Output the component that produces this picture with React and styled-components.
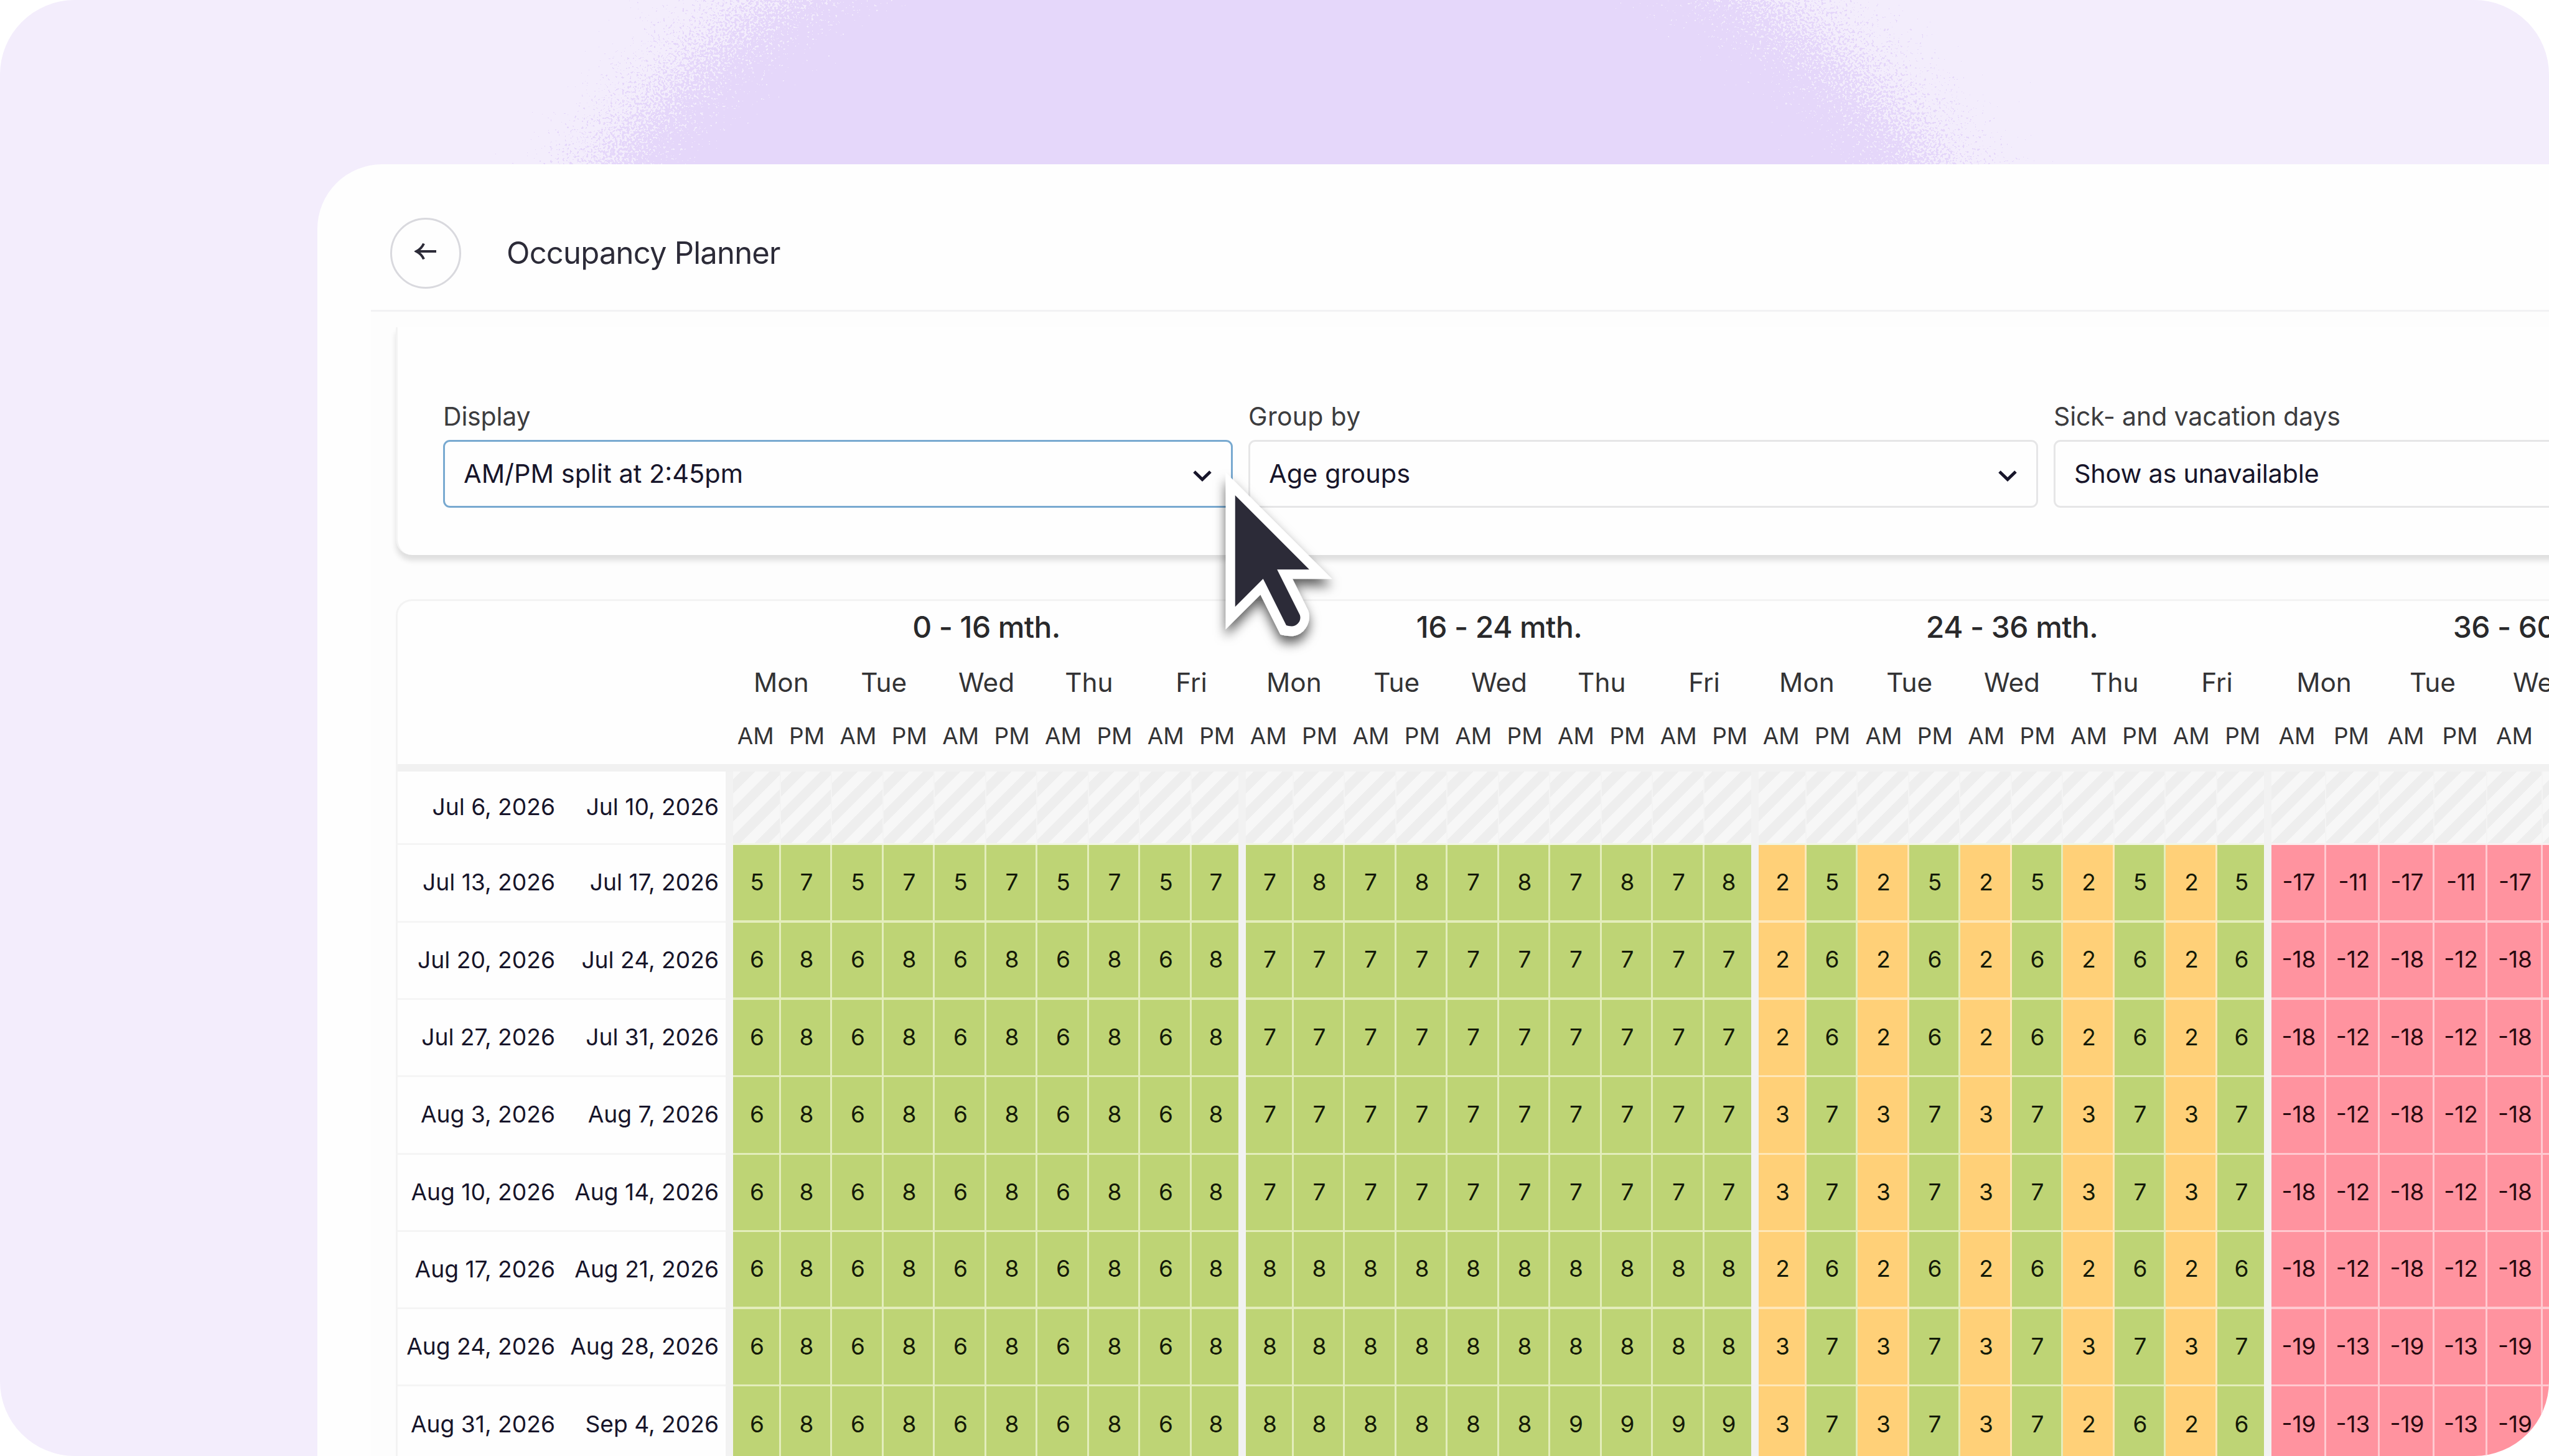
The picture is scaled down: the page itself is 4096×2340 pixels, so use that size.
import React from 'react';
import styled, { createGlobalStyle } from 'styled-components';

const Global = createGlobalStyle`
  *, *::before, *::after { box-sizing: border-box; }
  body { margin: 0; background: #fff; font-family: Inter, "Liberation Sans", sans-serif; }
`;

const INK = '#2c2b38';
const COLUMNS = [77, 82, 83, 82, 83, 82, 83, 82, 83, 75];
const LAST_COLUMNS = [88, 86, 88, 85, 89, 88];
const HEAD_COLUMNS = Array(10).fill(82.4);
const LAST_HEAD_COLUMNS = [88, 87, 88, 86, 89, 85, 86, 86, 86, 86];

const Stage = styled.main`
  position: relative;
  width: 4096px;
  height: 2340px;
  overflow: hidden;
  border-radius: 120px;
  background: #f3edfc;
  padding: 264px 0 0 510px;
`;

const Glow = styled.svg`
  position: absolute;
  left: 0;
  top: 0;
`;

const Panel = styled.section`
  position: relative;
  width: 3586px;
  height: 2076px;
  background: #fefefe;
  border-radius: 104px 0 0 0;
  padding-left: 86px;
`;

const TopBar = styled.header`
  display: flex;
  align-items: center;
  height: 237px;
  padding: 51px 0 0 31px;
  border-bottom: 3px solid #f2f2f3;
  color: ${INK};
`;

const BackButton = styled.button`
  display: grid;
  place-items: center;
  width: 114px;
  height: 114px;
  margin: 0;
  padding: 0 0 6px;
  border: 3px solid #d9d9de;
  border-radius: 50%;
  background: transparent;
  color: ${INK};
`;

const Title = styled.h1`
  margin: 0 0 0 73px;
  font-size: 49px;
  font-weight: 400;
  line-height: 60px;
  letter-spacing: -0.8px;
`;

const Body = styled.div`
  background: #fdfdfd;
  height: 1839px;
  padding-left: 40px;
  overflow: hidden;
`;

const Filters = styled.section`
  display: grid;
  grid-template-columns: repeat(3, 1269px);
  column-gap: 25px;
  width: 3980px;
  height: 366px;
  margin-top: 25px;
  padding: 117px 0 0 73px;
  border-left: 3px solid #f3f3f3;
  border-radius: 0 0 0 26px;
  background: #fefefe;
  box-shadow: 0 9px 9px rgba(0, 0, 0, 0.12);
`;

const Field = styled.label`
  display: block;
  color: #3c3c3e;
  font-size: 41px;
  line-height: 52px;
`;

const FieldName = styled.span`
  display: block;
  letter-spacing: ${(p) => p.$ls || 0}px;
`;

const Select = styled.span`
  display: flex;
  align-items: center;
  justify-content: space-between;
  height: 109px;
  margin-top: 12px;
  padding: 0 30px 2px;
  border: 3px solid ${(p) => (p.$active ? '#78a9d0' : '#e6e6e7')};
  border-radius: 11px;
  color: #17152a;
  background: #fefefe;
  font-size: 41.5px;
  letter-spacing: ${(p) => p.$ls || 0}px;
`;

const Table = styled.section`
  width: 3980px;
  margin-top: 71px;
  border: 3px solid #f3f3f3;
  border-right: 0;
  border-radius: 26px 0 0 0;
  background: #fefefe;
`;

const TableHead = styled.div`
  display: flex;
  height: 274px;
  border-bottom: 12px solid #f1f1f1;
  padding-left: 534px;
`;

const HeadGroup = styled.div`
  flex: none;
  padding-left: ${(p) => p.$shift}px;
  text-align: center;
  color: #333335;
`;

const GroupName = styled.div`
  height: 87px;
  padding-top: 12px;
  font-size: 48px;
  font-weight: 500;
  line-height: 60px;
  letter-spacing: -0.6px;
  color: #29292b;
`;

const HeadRow = styled.div`
  display: flex;
  height: ${(p) => p.$height}px;
  font-size: ${(p) => p.$size}px;
  line-height: 88px;
`;

const HeadCell = styled.span`
  flex: none;
  width: ${(p) => p.$width}px;
  white-space: nowrap;
`;

const Row = styled.div`
  display: flex;
  height: ${(p) => p.$height}px;
`;

const Dates = styled.div`
  display: flex;
  flex: none;
  width: 527px;
  padding-bottom: 3px;
  border-bottom: 3px solid #f5f5f5;
  color: #17152a;
  font-size: 37.2px;
`;

const DateText = styled.span`
  display: flex;
  align-items: center;
  justify-content: flex-end;
  width: ${(p) => p.$width}px;
  flex: none;
  white-space: nowrap;
`;

const Group = styled.div`
  display: flex;
  flex: none;
  border-left: 12px solid #f2f2f2;
`;

const tones = {
  green: ['#bed475', '#e3edbb'],
  amber: ['#ffd078', '#ffe7b8'],
  red: ['#ff939f', '#ffc9d0'],
};

const Cell = styled.span`
  display: flex;
  align-items: center;
  justify-content: center;
  flex: none;
  width: ${(p) => p.$width}px;
  padding: 0 0 3px 3px;
  background: ${(p) => tones[p.$tone][0]};
  border-bottom: ${(p) => (p.$thick ? 4 : 3)}px solid ${(p) => tones[p.$tone][1]};
  border-right: ${(p) => (p.$last ? 0 : 3)}px solid ${(p) => tones[p.$tone][1]};
  color: ${(p) => (p.$tone === 'red' ? '#2a0a10' : '#141a08')};
  font-size: 37px;
`;

const ClosedCell = styled.span`
  flex: none;
  width: ${(p) => p.$width}px;
  border-right: ${(p) => (p.$last ? 0 : 2)}px solid #f4f4f4;
  border-bottom: 3px solid ${(p) => (p.$pink ? '#fbeef0' : '#f1f6e2')};
  background: repeating-linear-gradient(-45deg, #f7f7f7 0 12.7px, #eeeeee 12.7px 28.8px, #f7f7f7 28.8px 32.2px);
`;

const Pointer = styled.svg`
  position: absolute;
  left: 1954px;
  top: 734px;
  overflow: visible;
`;

const Arrow = () => (
  <svg width="36" height="28" viewBox="0 0 36 28" fill="none" stroke="currentColor" strokeWidth="4">
    <path d="M35 14H4M15 1.5C13 6 8 11.500 3 14C8 16.500 13 22 15 26.500" />
  </svg>
);

const Chevron = () => (
  <svg width="32" height="28" viewBox="0 0 32 28" fill="none" stroke="#17152a" strokeWidth="5">
    <path d="M3 11l13 12.500L29 11" />
  </svg>
);

const alt = (a, b) => Array.from({ length: 10 }, (_, i) => (i % 2 ? b : a));
const flat = (n) => Array(10).fill(n);

const weeks = [
  ['Jul 13, 2026', 'Jul 17, 2026', alt(5, 7), alt(7, 8), alt(2, 5), [-17, -11]],
  ['Jul 20, 2026', 'Jul 24, 2026', alt(6, 8), flat(7), alt(2, 6), [-18, -12]],
  ['Jul 27, 2026', 'Jul 31, 2026', alt(6, 8), flat(7), alt(2, 6), [-18, -12]],
  ['Aug 3, 2026', 'Aug 7, 2026', alt(6, 8), flat(7), alt(3, 7), [-18, -12]],
  ['Aug 10, 2026', 'Aug 14, 2026', alt(6, 8), flat(7), alt(3, 7), [-18, -12]],
  ['Aug 17, 2026', 'Aug 21, 2026', alt(6, 8), flat(8), alt(2, 6), [-18, -12]],
  ['Aug 24, 2026', 'Aug 28, 2026', alt(6, 8), flat(8), alt(3, 7), [-19, -13]],
  ['Aug 31, 2026', 'Sep 4, 2026', alt(6, 8), [8, 8, 8, 8, 8, 8, 9, 9, 9, 9], [3, 7, 3, 7, 3, 7, 2, 6, 2, 6], [-19, -13]],
];
const heights = [125, 124, 124, 125, 124, 124, 124, 127];
const thickRows = [0, 1, 5];

const toneOf = (n) => (n < 0 ? 'red' : n < 4 ? 'amber' : 'green');
const groups = ['0 - 16 mth.', '16 - 24 mth.', '24 - 36 mth.', '36 - 60 mth.'];
const days = ['Mon', 'Tue', 'Wed', 'Thu', 'Fri'];
const widthsOf = (g) => (g === 3 ? LAST_COLUMNS : COLUMNS);

function Head() {
  return (
    <TableHead>
      {groups.map((name, g) => {
        const last = g === 3;
        const widths = last ? LAST_HEAD_COLUMNS : HEAD_COLUMNS;
        return (
          <HeadGroup key={name} $shift={last ? 2 : 0}>
            <GroupName>{name}</GroupName>
            <HeadRow $height={86} $size={42.3}>
              {days.slice(0, last ? 3 : 5).map((d, i) => (
                <HeadCell key={d} $width={widths[i * 2] + widths[i * 2 + 1]}>{d}</HeadCell>
              ))}
            </HeadRow>
            <HeadRow $height={80} $size={37}>
              {widths.map((w, i) => (
                <HeadCell key={i} $width={w}>{last && i > 4 ? '' : i % 2 ? 'PM' : 'AM'}</HeadCell>
              ))}
            </HeadRow>
          </HeadGroup>
        );
      })}
    </TableHead>
  );
}

export default function App() {
  return (
    <>
      <Global />
      <Stage>
        <Glow width="4096" height="264" viewBox="0 0 4096 264">
          <defs>
            <filter id="grain" filterUnits="userSpaceOnUse" x="0" y="-300" width="4096" height="900">
              <feTurbulence type="fractalNoise" baseFrequency="0.26" numOctaves="3" seed="7" result="n" />
              <feDisplacementMap in="SourceGraphic" in2="n" scale="400" xChannelSelector="R" yChannelSelector="G" />
            </filter>
          </defs>
          <circle cx="2040" cy="1075" r="1345" fill="#e5d7fa" filter="url(#grain)" />
        </Glow>
        <Panel>
          <TopBar>
            <BackButton aria-label="Back"><Arrow /></BackButton>
            <Title>Occupancy Planner</Title>
          </TopBar>
          <Body>
            <Filters>
              <Field>
                <FieldName $ls={-0.2}>Display</FieldName>
                <Select $active>AM/PM split at 2:45pm<Chevron /></Select>
              </Field>
              <Field>
                <FieldName $ls={0.3}>Group by</FieldName>
                <Select>Age groups<Chevron /></Select>
              </Field>
              <Field>
                <FieldName $ls={-0.1}>Sick- and vacation days</FieldName>
                <Select $ls={-0.3}>Show as unavailable<Chevron /></Select>
              </Field>
            </Filters>
            <Table>
              <Head />
              <Row $height={118}>
                <Dates>
                  <DateText $width={253}>Jul 6, 2026</DateText>
                  <DateText $width={263}>Jul 10, 2026</DateText>
                </Dates>
                {groups.map((name, g) => (
                  <Group key={name}>
                    {widthsOf(g).map((w, i) => <ClosedCell key={i} $width={w} $pink={g === 3} $last={i === 9} />)}
                  </Group>
                ))}
              </Row>
              {weeks.map(([from, to, ...sets], r) => (
                <Row key={from} $height={heights[r]}>
                  <Dates>
                    <DateText $width={253}>{from}</DateText>
                    <DateText $width={263}>{to}</DateText>
                  </Dates>
                  {sets.map((values, g) => (
                    <Group key={g}>
                      {widthsOf(g).map((w, i) => {
                        const n = g === 3 ? values[i % 2] : values[i];
                        const hidden = g === 3 && i === 5;
                        return (
                          <Cell key={i} $width={w} $tone={toneOf(n)} $last={i === 9} $thick={thickRows.includes(r)}>
                            {hidden ? '' : n}
                          </Cell>
                        );
                      })}
                    </Group>
                  ))}
                </Row>
              ))}
            </Table>
          </Body>
        </Panel>
        <Pointer width="200" height="300" viewBox="0 0 703 1055">
          <defs>
            <filter id="drop" x="-30%" y="-30%" width="160%" height="160%">
              <feDropShadow dx="0" dy="40" stdDeviation="32" floodColor="#000" floodOpacity="0.62" />
            </filter>
          </defs>
          <path d="M55 90L655 690H432L520 868C545 930 500 1014 425 1014C400 1014 382 1010 364 1005L251 780L55 975Z" fill="#fff" filter="url(#drop)" />
          <path d="M108 218L527 637H345L474 895C485 930 455 958 428 958C415 958 405 956 397 953L266 690L108 848Z" fill={INK} />
        </Pointer>
      </Stage>
    </>
  );
}
